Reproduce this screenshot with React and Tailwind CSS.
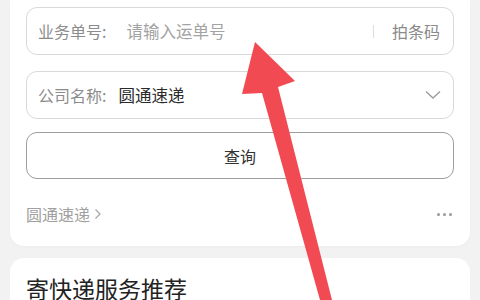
import React from 'react';

const font = { fontFamily: '"Noto Sans CJK SC", "Noto Sans", sans-serif' };

const Arrow = () => (
  <svg className="absolute inset-0 pointer-events-none" width="480" height="300" viewBox="0 0 480 300">
    <polygon points="255,42 295,81 278,87 332,300 320,300 262,93 242,94" fill="#f24a52" />
  </svg>
);

export default function App() {
  return (
    <div className="relative w-[480px] h-[300px] overflow-hidden bg-[#f2f2f2] px-[10px]" style={font}>
      {/* 查询卡片 */}
      <div className="bg-white rounded-b-[14px] px-4 pt-[7px] pb-[21px] shadow-[0_1px_3px_rgba(0,0,0,0.03)]">
        <div className="h-12 flex items-center border border-[#d9d9d9] rounded-[11px] pl-[11px] pr-[13px] text-[16px]">
          <span className="text-[#8c8c8c]">业务单号:</span>
          <span className="ml-[20px] text-[#a3a3a3] flex-1 text-[16.5px]">请输入运单号</span>
          <span className="w-px h-[13px] bg-[#dedede] mr-[18px]"></span>
          <span className="text-[#8a8a8a]">拍条码</span>
        </div>
        <div className="h-12 mt-4 flex items-center border border-[#d9d9d9] rounded-[11px] pl-[11px] pr-[12px] text-[16px]">
          <span className="text-[#8c8c8c]">公司名称:</span>
          <span className="ml-[12px] text-[#2b2b2b] flex-1 text-[16.5px]">圆通速递</span>
          <svg width="16" height="10" viewBox="0 0 16 10">
            <polyline points="1,1.5 8,8 15,1.5" fill="none" stroke="#9a9a9a" strokeWidth="1.3" />
          </svg>
        </div>
        <div className="h-[47px] mt-[13px] flex items-center justify-center border border-[#9e9e9e] rounded-[11px] text-[16px] text-[#333]">
          查询
        </div>
        <div className="mt-6 h-[22px] flex items-center justify-between text-[16px]">
          <span className="text-[#a0a0a0] flex items-center">
            圆通速递
            <svg className="ml-[4px]" width="8" height="12" viewBox="0 0 8 12">
              <polyline points="1.5,1.5 6,6 1.5,10.5" fill="none" stroke="#a8a8a8" strokeWidth="1.3" />
            </svg>
          </span>
          <span className="flex gap-[3px] mr-[2px]">
            <span className="w-[3px] h-[3px] rounded-full bg-[#9a9a9a]"></span>
            <span className="w-[3px] h-[3px] rounded-full bg-[#9a9a9a]"></span>
            <span className="w-[3px] h-[3px] rounded-full bg-[#9a9a9a]"></span>
          </span>
        </div>
      </div>

      {/* 寄快递卡片 */}
      <div className="mt-3 bg-white rounded-t-[14px] px-4 pt-[14px] h-[60px]">
        <div className="text-[23px] text-[#222] leading-[32px]">寄快递服务推荐</div>
      </div>

      <Arrow />
    </div>
  );
}
